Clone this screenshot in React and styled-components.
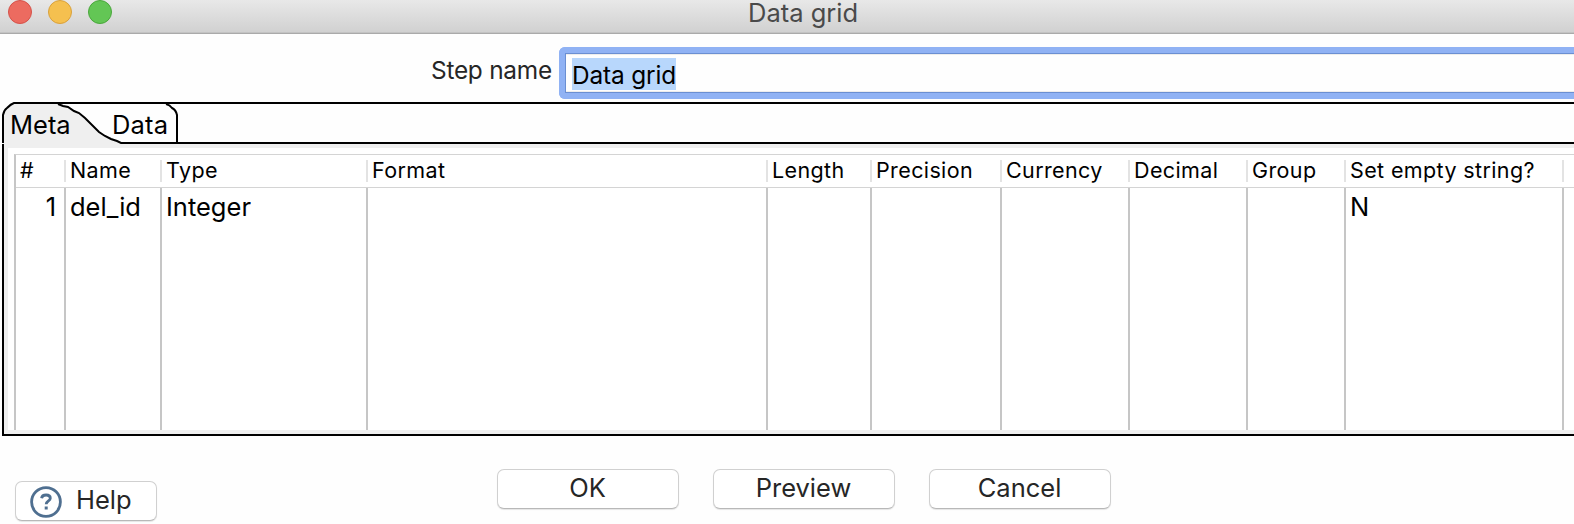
import React from "react";
import styled, { createGlobalStyle } from "styled-components";

const GlobalStyle = createGlobalStyle`
  *, *::before, *::after { box-sizing: border-box; }
  html, body { margin: 0; background: #fefefe; overflow: hidden; }
`;

const Dialog = styled.div`
  width: 1574px;
  height: 524px;
  overflow: hidden;
  display: flex;
  flex-direction: column;
  background: #fefefe;
  color: #000;
  font-family: Inter, "Liberation Sans", sans-serif;
  font-size: 25.5px;
  font-kerning: normal;
`;

const Text = styled.span`
  white-space: nowrap;
  letter-spacing: ${(p) => p.$track || 0}px;
`;

const TitleBar = styled.header`
  flex: none;
  height: 34px;
  display: grid;
  grid-template-columns: 748px auto 1fr;
  background: linear-gradient(#e8e8e8, #d1d1d1 32px);
  border-bottom: 1px solid #aaa;
  box-shadow: inset 0 -1px #c3c3c3;
  color: #4a4a4a;
  line-height: 26px;
`;

const Lights = styled.div`
  display: flex;
  gap: 16px;
  padding-left: 8px;
`;

const Light = styled.i`
  width: 24px;
  height: 24px;
  border-radius: 50%;
  background: ${(p) => p.$fill};
  border: 1px solid ${(p) => p.$rim};
`;

const StepRow = styled.div`
  flex: none;
  height: 68px;
  display: flex;
  align-items: flex-start;
  padding: 13px 0 0 431px;
  font-size: 24.4px;
`;

const StepLabel = styled.label`
  width: 128px;
  line-height: 46px;
  color: #262626;
`;

const Field = styled.div`
  flex: 1;
  height: 52px;
  border: 6px solid #90b2f4;
  border-right: 0;
  border-radius: 6px 0 0 6px;
`;

const FieldInner = styled.div`
  height: 40px;
  border: 1px solid #6b8fd2;
  border-right: 0;
  box-shadow: inset 0 1px #ededed, inset 0 -1px #ededed;
  padding: 4px 0 0 6px;
`;

const Selection = styled.span`
  display: block;
  width: 104px;
  height: 32px;
  line-height: 35px;
  background: #b8d7fc;
`;

const Tabs = styled.nav`
  flex: none;
  position: relative;
  height: 42px;
  margin-left: 2px;
  display: flex;
  line-height: 45px;
`;

const TabOutline = styled.svg`
  position: absolute;
  inset: 0;
`;

const Tab = styled.div`
  position: relative;
  width: ${(p) => p.$width}px;
  padding-left: ${(p) => p.$inset}px;
`;

const Panel = styled.section`
  flex: none;
  height: 292px;
  margin-left: 2px;
  border-left: 2px solid #000;
  border-bottom: 2px solid #000;
  background: #efefef;
  padding: 4px 0 4px 4px;
`;

const TableFrame = styled.div`
  height: 282px;
  padding: 6px 0 0 6px;
  background: #fff;
`;

const Table = styled.div`
  height: 276px;
  display: flex;
  border-top: 1px solid #d4d4d4;
  border-left: 2px solid #c6c6c6;
`;

const Column = styled.div`
  flex: ${(p) => (p.$width ? "none" : 1)};
  width: ${(p) => p.$width}px;
  display: flex;
  flex-direction: column;
`;

const Head = styled.div`
  height: 33px;
  padding: 5px 0 5px;
  border-bottom: 1px solid #d4d4d4;
  font-size: 21.5px;
`;

const HeadLabel = styled.div`
  height: 22px;
  line-height: 21px;
  padding-left: 4px;
  border-right: ${(p) => (p.$last ? 0 : 2)}px solid #e3e3e3;
`;

const Cells = styled.div`
  flex: 1;
  line-height: 38px;
  padding: 0 8px 0 4px;
  text-align: ${(p) => (p.$right ? "right" : "left")};
  border-right: ${(p) => (p.$last ? 0 : 2)}px solid #c6c6c6;
`;

const Footer = styled.footer`
  flex: 1;
  display: flex;
  align-items: flex-start;
  padding-left: 15px;
`;

const Button = styled.button`
  flex: none;
  width: ${(p) => p.$width || 182}px;
  height: 40px;
  margin: ${(p) => p.$top || 33}px ${(p) => p.$after || 34}px 0 0;
  padding: 0 1px 2px 0;
  display: flex;
  align-items: center;
  justify-content: ${(p) => (p.$start ? "flex-start" : "center")};
  border: 1px solid #d0d0d0;
  border-bottom-color: #b8b8b8;
  border-radius: 7px;
  box-shadow: 0 1px 1px rgba(0, 0, 0, 0.1);
  background: #fff;
  color: #262626;
  font: inherit;
  line-height: 38px;
`;

const HelpIcon = styled.svg`
  flex: none;
  margin: 4px 14px 0 14px;
`;

const columns = [
  { name: "#", width: 50, value: "1", right: true },
  { name: "Name", width: 96, value: "del_id" },
  { name: "Type", width: 206, value: "Integer" },
  { name: "Format", width: 400 },
  { name: "Length", width: 104 },
  { name: "Precision", width: 130 },
  { name: "Currency", width: 128 },
  { name: "Decimal", width: 118 },
  { name: "Group", width: 98 },
  { name: "Set empty string?", width: 218, value: "N" },
  { name: "", last: true },
];

export default function App() {
  return (
    <Dialog>
      <GlobalStyle />
      <TitleBar>
        <Lights>
          <Light $fill="#ec6b60" $rim="#d5524a" />
          <Light $fill="#f5c04f" $rim="#d9a13c" />
          <Light $fill="#63c655" $rim="#4aa73c" />
        </Lights>
        <Text>Data grid</Text>
      </TitleBar>
      <StepRow>
        <StepLabel><Text $track={-0.25}>Step name</Text></StepLabel>
        <Field>
          <FieldInner>
            <Selection><Text $track={-0.15}>Data grid</Text></Selection>
          </FieldInner>
        </Field>
      </StepRow>
      <Tabs>
        <TabOutline width="1572" height="42" fill="none" stroke="#000" strokeWidth="2">
          <path d="M1 42V13L5 6L12 1H56L65 4L77 11L98 31L109 37L119 42Z" fill="#efefef" stroke="none" />
          <path d="M1 41V13Q2 8 5 6Q9 2 12 1H1572" />
          <path d="M56 2L61 4L66 5L72 9L77 11L83 16L97 30L103 34L109 37L115 39L119 41H1572" />
          <path d="M164 2Q168 3 170 6Q174 8 175 13V41" />
        </TabOutline>
        <Tab $width={101} $inset={8}><Text>Meta</Text></Tab>
        <Tab $width={75} $inset={9}><Text $track={0.2}>Data</Text></Tab>
      </Tabs>
      <Panel>
        <TableFrame>
          <Table>
            {columns.map((c) => (
              <Column key={c.name} $width={c.width}>
                <Head><HeadLabel $last={c.last}><Text $track={0.38}>{c.name}</Text></HeadLabel></Head>
                <Cells $right={c.right} $last={c.last}><Text>{c.value}</Text></Cells>
              </Column>
            ))}
          </Table>
        </TableFrame>
      </Panel>
      <Footer>
        <Button $width={142} $top={45} $after={340} $start>
          <HelpIcon width="32" height="32" viewBox="0 0 32 32" fill="none" stroke="#4f6f90">
            <circle cx="16" cy="16" r="14.4" strokeWidth="2.8" />
            <path d="M11.6 12.2C11.9 9.9 13.6 9 16.1 9C18.7 9 20.3 10.3 20.3 12.2C20.3 14.9 16.2 14.8 16.2 18.2" strokeWidth="2.8" />
            <path d="M16.2 20.5V23.5" strokeWidth="3" />
          </HelpIcon>
          <Text>Help</Text>
        </Button>
        <Button><Text>OK</Text></Button>
        <Button><Text>Preview</Text></Button>
        <Button><Text>Cancel</Text></Button>
      </Footer>
    </Dialog>
  );
}
